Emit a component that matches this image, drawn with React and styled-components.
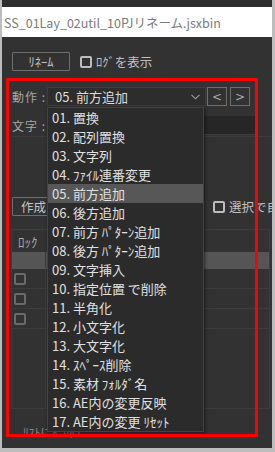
import React from "react";
import styled, { createGlobalStyle } from "styled-components";

const GlobalStyle = createGlobalStyle`
	html, body {
		margin: 0;
		padding: 0;
		background: #bdbdbd;
	}
	* {
		box-sizing: border-box;
	}
`;

const FONT = `"Noto Sans CJK JP", "Noto Sans", sans-serif`;

const Window = styled.div`
	position: relative;
	width: 275px;
	height: 452px;
	background: #bdbdbd;
	padding: 0 3px 4px 2px;
	display: flex;
	flex-direction: column;
	overflow: hidden;
	font-family: ${FONT};
`;
const TopStrip = styled.div`
	height: 7px;
	background: #2e2e2e;
	flex-shrink: 0;
`;
const TitleBar = styled.div`
	height: 30px;
	background: #ffffff;
	flex-shrink: 0;
	display: flex;
	align-items: center;
	padding-left: 2px;
	font-size: 12.5px;
	color: #7b7b7b;
	white-space: nowrap;
`;
const Body = styled.div`
	flex: 1;
	background: #323232;
	padding: 15px 0 0 10px;
	display: flex;
	flex-direction: column;
	overflow: hidden;
	color: #b4b4b4;
	font-size: 12px;
`;
const Row = styled.div`
	display: flex;
	align-items: center;
	height: 19px;
	margin-bottom: ${(p) => p.$mb || 0}px;
	flex-shrink: 0;
	white-space: nowrap;
`;
const Button = styled.div`
	width: ${(p) => p.$w}px;
	height: 19px;
	border: 1px solid #6e6e6e;
	border-radius: 1px;
	display: flex;
	align-items: center;
	justify-content: ${(p) => (p.$left ? "flex-start" : "center")};
	padding-left: ${(p) => (p.$left ? 8 : 0)}px;
	color: #c4c4c4;
	font-size: 12.5px;
	flex-shrink: 0;
`;
const Check = styled.span`
	display: inline-block;
	width: 12px;
	height: 12px;
	border: 2px solid ${(p) => (p.$dim ? "#6a6a6a" : "#bdbdbd")};
	border-radius: 2px;
	flex-shrink: 0;
	margin-left: ${(p) => p.$ml || 0}px;
`;
const CheckText = styled.span`
	margin-left: 4px;
	color: #c0c0c0;
	font-size: 12.5px;
`;
const Label = styled.span`
	width: 35px;
	flex-shrink: 0;
	color: #a8a8a8;
	font-size: 12px;
	letter-spacing: 1px;
`;
const Select = styled.div`
	width: 159px;
	height: 19px;
	background: #2d2d2d;
	border: 1px solid #3e3e3e;
	display: flex;
	align-items: center;
	justify-content: space-between;
	padding: 0 5px 0 7px;
	color: #dcdcdc;
	font-size: 13px;
`;
const NavButton = styled.div`
	width: 20px;
	height: 19px;
	margin-left: ${(p) => p.$ml}px;
	border: 1px solid #6e6e6e;
	display: flex;
	align-items: center;
	justify-content: center;
	color: #a8a8a8;
	font-size: 12px;
	font-family: "DejaVu Sans", sans-serif;
`;
const TextInput = styled.div`
	width: 208px;
	height: 19px;
	background: #262626;
	border-bottom: 1px solid #3e3e3e;
`;
const Divider = styled.div`
	height: 1px;
	background: #3c3c3c;
	margin: 1px 0 60px 0;
	flex-shrink: 0;
`;
const ListBox = styled.div`
	margin: 13px 0 0 -1px;
	width: 259px;
	height: 180px;
	border: 1px solid #3c3c3c;
	display: flex;
	flex-direction: column;
	flex-shrink: 0;
`;
const ListHeader = styled.div`
	height: 22px;
	display: flex;
	align-items: center;
	padding-left: 6px;
	color: #a8a8a8;
	font-size: 13px;
`;
const ListRow = styled.div`
	height: ${(p) => p.$h}px;
	display: flex;
	background: ${(p) => (p.$active ? "#555555" : "transparent")};
	border-bottom: 1px solid ${(p) => (p.$active ? "transparent" : "#3c3c3c")};
`;
const LockCell = styled.div`
	width: 34px;
	border-right: 1px solid #3c3c3c;
	display: flex;
	align-items: center;
	padding-left: 2px;
`;
const ListFill = styled.div`
	flex: 1;
	display: flex;
`;
const FillCell = styled.div`
	width: 34px;
	border-right: 1px solid #3c3c3c;
`;
const Hint = styled.div`
	margin: 17px 0 0 11px;
	font-size: 11.5px;
	color: #8a8a8a;
	line-height: 12px;
`;
const Dropdown = styled.div`
	position: absolute;
	left: 47px;
	top: 107px;
	width: 157px;
	height: 325px;
	background: #2b2b2b;
	border: 1px solid #434343;
	box-shadow: 1px 1px 3px rgba(0, 0, 0, 0.5);
	z-index: 2;
`;
const Item = styled.div`
	height: 19px;
	line-height: 19px;
	padding-left: 4px;
	font-size: 13px;
	color: #e0e0e0;
	white-space: nowrap;
	background: ${(p) => (p.$selected ? "#575757" : "transparent")};
`;
const Highlight = styled.div`
	position: absolute;
	left: 6px;
	top: 78px;
	width: 252px;
	height: 359px;
	border: 3px solid #ff0000;
	z-index: 3;
	pointer-events: none;
`;

const ITEMS = [
	"01. 置換",
	"02. 配列置換",
	"03. 文字列",
	"04. ﾌｧｲﾙ連番変更",
	"05. 前方追加",
	"06. 後方追加",
	"07. 前方 ﾊﾟﾀｰﾝ追加",
	"08. 後方 ﾊﾟﾀｰﾝ追加",
	"09. 文字挿入",
	"10. 指定位置 で削除",
	"11. 半角化",
	"12. 小文字化",
	"13. 大文字化",
	"14. ｽﾍﾟｰｽ削除",
	"15. 素材 ﾌｫﾙﾀﾞ名",
	"16. AE内の変更反映",
	"17. AE内の変更 ﾘｾｯﾄ",
];

const Chevron = () => (
	<svg width="9" height="6" viewBox="0 0 9 6">
		<path d="M0.5 0.8 L4.5 4.8 L8.5 0.8" fill="none" stroke="#a0a0a0" strokeWidth="1.1" />
	</svg>
);

export default function App() {
	const selected = 4;
	return (
		<>
			<GlobalStyle />
			<Window>
				<TopStrip />
				<TitleBar>SS_01Lay_02util_10PJリネーム.jsxbin</TitleBar>
				<Body>
					<Row $mb={16}>
						<Button $w={58}>ﾘﾈｰﾑ</Button>
						<Check $ml={10} />
						<CheckText>ﾛｸﾞを表示</CheckText>
					</Row>
					<Row $mb={10}>
						<Label>動作 :</Label>
						<Select>
							<span>{ITEMS[selected]}</span>
							<Chevron />
						</Select>
						<NavButton $ml={1}>&lt;</NavButton>
						<NavButton $ml={3}>&gt;</NavButton>
					</Row>
					<Row>
						<Label>文字 :</Label>
						<TextInput />
					</Row>
					<Divider />
					<Row>
						<Button $w={70} $left>作成</Button>
						<Check $ml={131} />
						<CheckText>選択で自動リネーム</CheckText>
					</Row>
					<ListBox>
						<ListHeader>ﾛｯｸ</ListHeader>
						<ListRow $h={17} $active>
							<LockCell />
						</ListRow>
						{[0, 1, 2].map((i) => (
							<ListRow key={i} $h={20}>
								<LockCell>
									<Check $dim />
								</LockCell>
							</ListRow>
						))}
						<ListFill>
							<FillCell />
						</ListFill>
					</ListBox>
					<Hint>ﾘｽﾄにﾄﾞﾛｯﾌﾟ</Hint>
				</Body>
				<Dropdown>
					{ITEMS.map((t, i) => (
						<Item key={t} $selected={i === selected}>{t}</Item>
					))}
				</Dropdown>
				<Highlight />
			</Window>
		</>
	);
}
